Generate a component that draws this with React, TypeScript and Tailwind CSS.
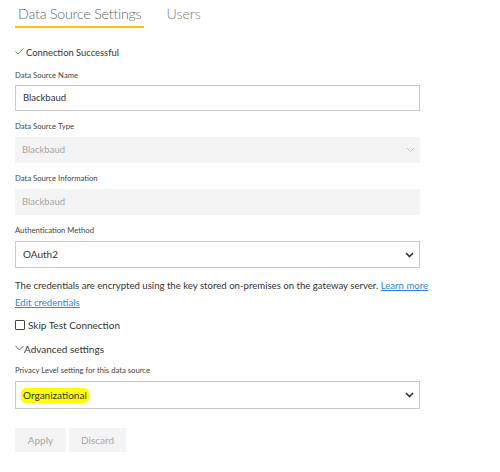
import React from 'react';

// ── Small drawn pieces ────────────────────────────────────────────────────────

function Chevron({ muted }: { muted?: boolean }) {
  return (
    <svg width="9" height="6" viewBox="0 0 9 6" className="shrink-0">
      <path
        d="M1 1 L4.5 4.5 L8 1"
        fill="none"
        stroke={muted ? '#c2c2c2' : '#333'}
        strokeWidth={muted ? 1 : 1.6}
      />
    </svg>
  );
}

function Label({ children, className = '' }: { children: React.ReactNode; className?: string }) {
  return <div className={`text-[7.7px] leading-[12px] h-[12px] text-[#444] ${className}`}>{children}</div>;
}

// ── Page ──────────────────────────────────────────────────────────────────────

export default function App() {
  return (
    <div
      className="w-[500px] h-[472px] bg-white overflow-hidden px-[15px]"
      style={{ fontFamily: 'Lato, "Open Sans", sans-serif' }}
    >
      {/* Tabs */}
      <div className="flex items-start h-[28px]">
        <div className="flex flex-col h-[28px]">
          <div className="px-[3px] pt-[3px] text-[14.2px] leading-[22px] font-light text-[#666] tracking-[-0.2px]">
            Data Source Settings
          </div>
          <div className="mt-auto h-[2px] bg-[#f2c811]" />
        </div>
        <div className="ml-[22px] pt-[3px] text-[14.2px] leading-[22px] font-light text-[#777]">Users</div>
      </div>

      {/* Connection status */}
      <div className="mt-[19px] h-[12px] flex items-center gap-[2px] text-[9.4px] leading-[12px] text-[#333]">
        <svg width="9" height="7" viewBox="0 0 9 7" className="shrink-0 -mt-[3px]">
          <path d="M0.5 3.5 L3 6 L8.5 0.5" fill="none" stroke="#5ba55b" strokeWidth="1" />
        </svg>
        <span>Connection Successful</span>
      </div>

      {/* Data Source Name */}
      <Label className="mt-[10px]">Data Source Name</Label>
      <div className="mt-[4px] w-[405px] h-[26px] border border-[#c8c8c8] flex items-center px-[7px] text-[9.5px] text-[#333]">
        Blackbaud
      </div>

      {/* Data Source Type */}
      <Label className="mt-[9px]">Data Source Type</Label>
      <div className="mt-[5px] w-[405px] h-[26px] bg-[#f4f4f4] flex items-center justify-between pl-[7px] pr-[5px] text-[9.5px] text-[#a6a6a6]">
        <span>Blackbaud</span>
        <Chevron muted />
      </div>

      {/* Data Source Information */}
      <Label className="mt-[9px]">Data Source Information</Label>
      <div className="mt-[5px] w-[405px] h-[26px] bg-[#f4f4f4] flex items-center px-[7px] text-[9.5px] text-[#a6a6a6]">
        Blackbaud
      </div>

      {/* Authentication Method */}
      <Label className="mt-[9px]">Authentication Method</Label>
      <div className="mt-[5px] w-[405px] h-[27px] border border-[#c8c8c8] flex items-center justify-between pl-[7px] pr-[5px] text-[10px] text-[#333]">
        <span>OAuth2</span>
        <Chevron />
      </div>

      {/* Credentials note */}
      <div className="mt-[11px] h-[14px] leading-[14px] text-[9.6px] text-[#333] whitespace-nowrap">
        The credentials are encrypted using the key stored on-premises on the gateway server.{' '}
        <a className="text-[#2b88d8] underline">Learn more</a>
      </div>
      <div className="mt-[3px] h-[14px] leading-[14px] text-[9.6px]">
        <a className="text-[#2b88d8] underline">Edit credentials</a>
      </div>

      {/* Skip test */}
      <div className="mt-[8px] h-[14px] flex items-center gap-[3px] text-[10px] text-[#333]">
        <span className="w-[10px] h-[10px] border border-[#444] rounded-[1px] bg-white" />
        <span>Skip Test Connection</span>
      </div>

      {/* Advanced */}
      <div className="mt-[10px] h-[14px] flex items-center text-[10px] text-[#333]">
        <svg width="9" height="6" viewBox="0 0 9 6" className="shrink-0 -mt-[2px]">
          <path d="M0.5 1 L4.5 5 L8.5 1" fill="none" stroke="#555" strokeWidth="0.9" />
        </svg>
        <span>Advanced settings</span>
      </div>

      {/* Privacy */}
      <Label className="mt-[8px]">Privacy Level setting for this data source</Label>
      <div className="mt-[5px] w-[405px] h-[28px] border border-[#c8c8c8] flex items-center justify-between pl-[5px] pr-[5px] text-[10px] text-[#333]">
        <span className="bg-[#ffff00] rounded-[5px] px-[2px] py-[1px] leading-[13px]">Organizational</span>
        <Chevron />
      </div>

      {/* Buttons */}
      <div className="mt-[19px] flex gap-[3px]">
        <button className="w-[51px] h-[24px] bg-[#f4f4f4] text-[10px] text-[#a6a6a6]">Apply</button>
        <button className="w-[57px] h-[24px] bg-[#f4f4f4] text-[10px] text-[#a6a6a6]">Discard</button>
      </div>
    </div>
  );
}
